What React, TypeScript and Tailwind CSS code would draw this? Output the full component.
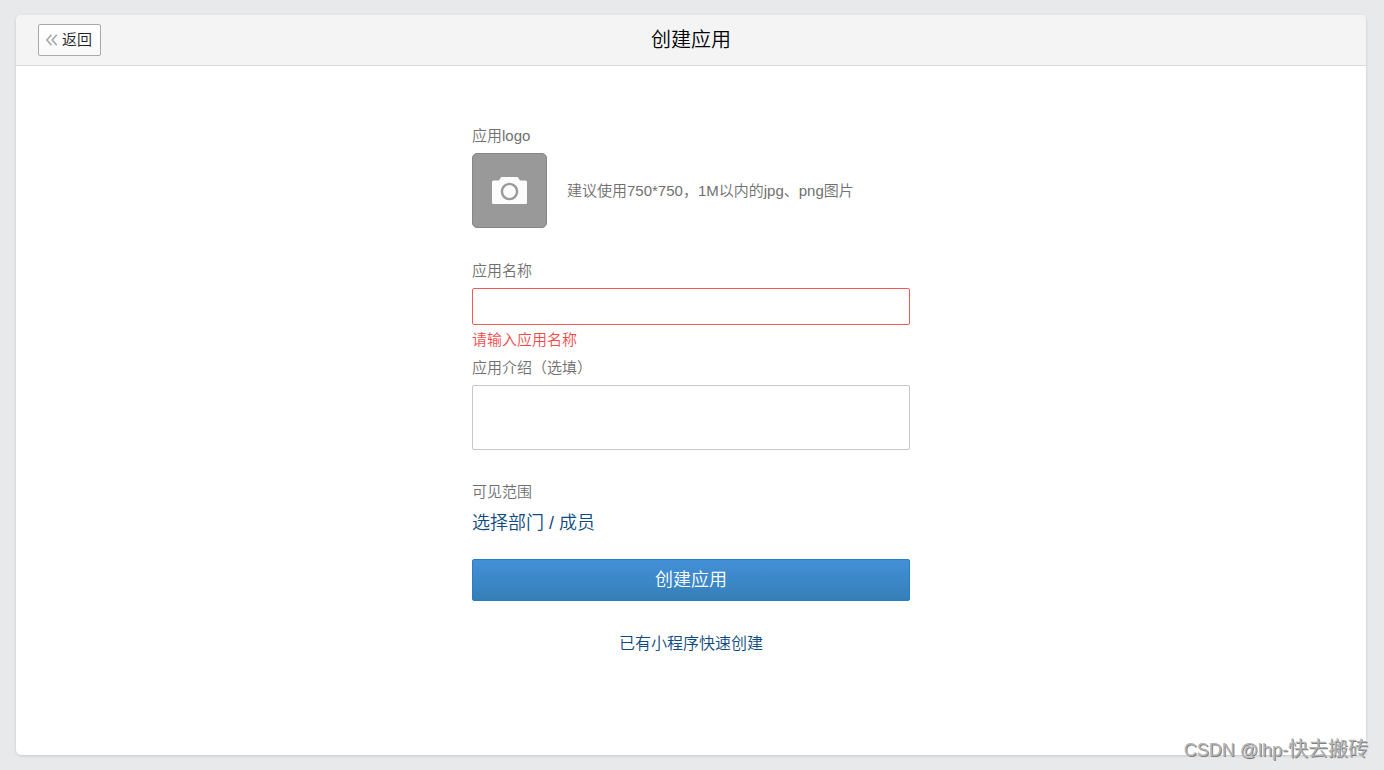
import type { ReactNode } from "react";

function FieldLabel({
	htmlFor,
	children,
}: {
	htmlFor: string;
	children: ReactNode;
}) {
	return (
		<label
			htmlFor={htmlFor}
			className="mb-[5px] block text-[15px] leading-6 text-[#707070]"
		>
			{children}
		</label>
	);
}

function BackIcon() {
	return (
		<svg
			width="12"
			height="12"
			viewBox="0 0 12 12"
			fill="none"
			stroke="#a3a8a5"
			strokeWidth="1.6"
			aria-hidden="true"
		>
			<path d="M5.500.8.9 6l4.600 5.200M10.800.8 6.200 6l4.600 5.200" />
		</svg>
	);
}

function CameraIcon() {
	return (
		<svg width="35" height="29" viewBox="0 0 35 29" aria-hidden="true">
			<path
				d="M1.5 4.500H6q1.200 0 1.700-1L8.400 2Q9 1 10.200 1h14.600q1.200 0 1.800 1l.7 1.500q.5 1 1.700 1h4.500Q35 4.500 35 6v20.500q0 1.500-1.500 1.500h-32Q0 28 0 26.500V6q0-1.500 1.500-1.500Z"
				fill="#fcfcfc"
			/>
			<circle
				cx="17.5"
				cy="15.5"
				r="7.600"
				fill="none"
				stroke="#999"
				strokeWidth="2.400"
			/>
		</svg>
	);
}

export default function App() {
	return (
		<div className="relative flex min-h-screen flex-col bg-[#e7e9eb] py-[15px] pr-[18px] pl-4 font-['Liberation_Sans','Noto_Sans_CJK_SC',sans-serif] font-[350]">
			<main className="flex flex-1 flex-col rounded-[5px] bg-white shadow-[0_1px_3px_rgba(0,0,0,0.15)]">
				<header className="grid grid-cols-[1fr_auto_1fr] items-center rounded-t-[5px] border-b border-[#d9dde0] bg-[#f4f4f4] px-[22px] py-[9px]">
					<button
						type="button"
						className="flex h-8 items-center gap-1 justify-self-start rounded-xs border border-[#a9a9a9] bg-linear-to-b from-white to-[#f9f9f9] pr-2 pl-[7px] text-[15px] text-[#222]"
					>
						<BackIcon />
						返回
					</button>
					<h1 className="text-xl leading-6 font-[350] text-black">创建应用</h1>
				</header>

				<form
					noValidate
					onSubmit={(e) => e.preventDefault()}
					className="mx-auto w-full max-w-[438px] pt-[58px] pb-[58px]"
				>
					<FieldLabel htmlFor="app-logo">应用logo</FieldLabel>
					<div className="mb-[31px] flex items-center gap-5">
						<button
							id="app-logo"
							type="button"
							className="flex size-[75px] shrink-0 items-center justify-center rounded-[5px] border border-[#858585] bg-[#999]"
						>
							<CameraIcon />
						</button>
						<p className="text-[15px] leading-6 text-[#707070]">
							建议使用750*750，1M以内的jpg、png图片
						</p>
					</div>

					<FieldLabel htmlFor="app-name">应用名称</FieldLabel>
					<input
						id="app-name"
						type="text"
						aria-invalid="true"
						aria-describedby="app-name-error"
						className="block h-[37px] w-full rounded-xs border border-[#f25a5a] bg-white px-2 text-[15px] outline-none"
					/>
					<p
						id="app-name-error"
						className="mt-[3px] mb-1 text-[15px] leading-6 text-[#f04c4c]"
					>
						请输入应用名称
					</p>

					<FieldLabel htmlFor="app-intro">应用介绍（选填）</FieldLabel>
					<textarea
						id="app-intro"
						className="mb-[30px] block h-[65px] w-full resize-none rounded-xs border border-[#c6c6c6] bg-white px-2 py-1 text-[15px] outline-none"
					/>

					<FieldLabel htmlFor="app-scope">可见范围</FieldLabel>
					<button
						id="app-scope"
						type="button"
						className="mt-[7px] block text-lg leading-6 text-[#0d4a80]"
					>
						选择部门 / 成员
					</button>

					<button
						type="submit"
						className="mt-6 h-[42px] w-full rounded-xs border border-[#2a7dc0] bg-linear-to-b from-[#4490d8] to-[#357fb8] text-lg leading-6 text-white"
					>
						创建应用
					</button>
					<div className="mt-[31px] text-center">
						<a href="#quick" className="text-base leading-6 text-[#0d4a80]">
							已有小程序快速创建
						</a>
					</div>
				</form>
			</main>

			<span className="absolute right-4 bottom-2 text-xl leading-6 text-[#b4b4b4] [text-shadow:1px_1px_0_#808080]">
				<span className="text-lg leading-6">CSDN @lhp-</span>
				快去搬砖
			</span>
		</div>
	);
}
